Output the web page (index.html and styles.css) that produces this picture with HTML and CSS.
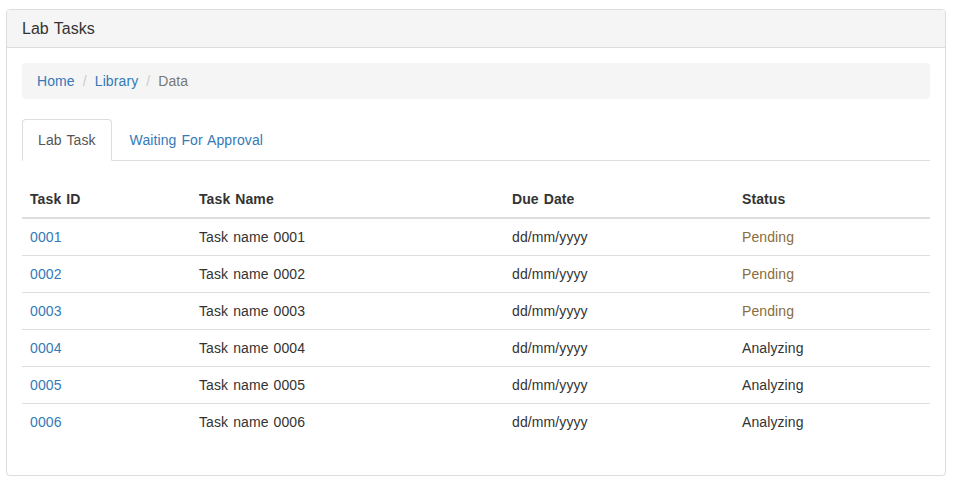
FILE: index.html
```html
<!DOCTYPE html>
<html>
<head>
<meta charset="utf-8">
<link rel="stylesheet" href="styles.css">
</head>
<body>
<div class="panel">
  <div class="panel-heading">Lab Tasks</div>
  <div class="panel-body">
    <ol class="breadcrumb">
      <li><a href="#">Home</a></li>
      <li><a href="#">Library</a></li>
      <li class="active">Data</li>
    </ol>
    <ul class="tabs">
      <li class="tab active"><a href="#">Lab Task</a></li>
      <li class="tab"><a href="#">Waiting For Approval</a></li>
    </ul>
    <table class="table">
      <colgroup>
        <col class="c1"><col class="c2"><col class="c3"><col class="c4">
      </colgroup>
      <thead>
        <tr><th>Task ID</th><th>Task Name</th><th>Due Date</th><th>Status</th></tr>
      </thead>
      <tbody>
        <tr><td><a href="#">0001</a></td><td>Task name 0001</td><td>dd/mm/yyyy</td><td class="warn">Pending</td></tr>
        <tr><td><a href="#">0002</a></td><td>Task name 0002</td><td>dd/mm/yyyy</td><td class="warn">Pending</td></tr>
        <tr><td><a href="#">0003</a></td><td>Task name 0003</td><td>dd/mm/yyyy</td><td class="warn">Pending</td></tr>
        <tr><td><a href="#">0004</a></td><td>Task name 0004</td><td>dd/mm/yyyy</td><td>Analyzing</td></tr>
        <tr><td><a href="#">0005</a></td><td>Task name 0005</td><td>dd/mm/yyyy</td><td>Analyzing</td></tr>
        <tr><td><a href="#">0006</a></td><td>Task name 0006</td><td>dd/mm/yyyy</td><td>Analyzing</td></tr>
      </tbody>
    </table>
  </div>
</div>
</body>
</html>
```
FILE: styles.css
```css
* { box-sizing: border-box; }
html, body { margin: 0; padding: 0; background: #fff; }
body {
  font-family: "Liberation Sans", Arial, sans-serif;
  font-size: 14px;
  line-height: 20px;
  color: #333;
  word-spacing: 1px;
  letter-spacing: 0.1px;
  padding: 9px 10px 0 6px;
}
a { color: #337ab7; text-decoration: none; }
.panel {
  border: 1px solid #ddd;
  border-radius: 4px;
  box-shadow: 0 1px 1px rgba(0,0,0,.05);
  background: #fff;
}
.panel-heading {
  background: #f5f5f5;
  border-bottom: 1px solid #ddd;
  border-radius: 3px 3px 0 0;
  padding: 9px 15px 8px;
  font-size: 16px;
  line-height: 20px;
  height: 38px;
  letter-spacing: 0;
}
.panel-body { padding: 15px; }
.breadcrumb {
  list-style: none;
  margin: 0 0 20px;
  padding: 8px 15px;
  background: #f5f5f5;
  border-radius: 4px;
  display: flex;
}
.breadcrumb li + li::before {
  content: "/";
  color: #ccc;
  padding: 0 8px;
}
.breadcrumb .active { color: #777; }
.tabs {
  list-style: none;
  margin: 0;
  padding: 0;
  display: flex;
  border-bottom: 1px solid #ddd;
}
.tab { margin-bottom: -1px; margin-right: 2px; }
.tab a {
  display: block;
  padding: 10px 15px;
  border: 1px solid transparent;
  border-radius: 4px 4px 0 0;
}
.tab.active a {
  color: #555;
  background: #fff;
  border-color: #ddd #ddd transparent;
}
.table {
  width: 100%;
  border-collapse: collapse;
  border-spacing: 0;
  margin: 20px 0 20px;
}
.c1 { width: 169px; }
.c2 { width: 313px; }
.c3 { width: 230px; }
.c4 { width: 196px; }
.table th, .table td {
  text-align: left;
  padding: 8px;
  line-height: 20px;
  vertical-align: top;
}
.table th {
  font-weight: bold;
  border-bottom: 2px solid #ddd;
}
.table td { border-top: 1px solid #ddd; }
.table tbody tr:first-child td { border-top: 0; }
.warn { color: #8a6d3b; }
```
